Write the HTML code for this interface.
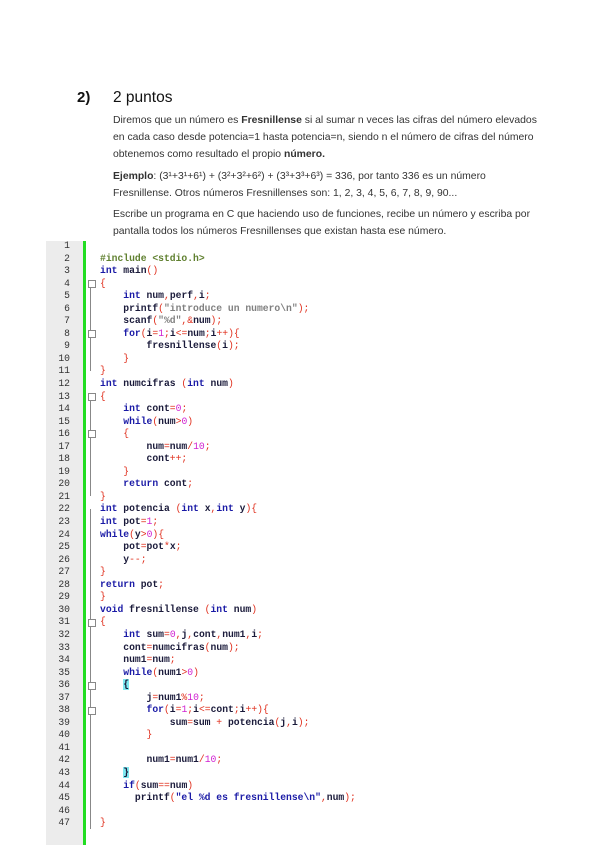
<!DOCTYPE html>
<html><head><meta charset="utf-8"><style>
body{margin:0;width:600px;height:848px;background:#fff;position:relative;overflow:hidden;font-family:"Liberation Sans",sans-serif;color:#222}
.h{position:absolute;top:89px;font-size:15px;font-weight:bold;color:#111}
.p{position:absolute;left:113px;font-size:10.4px;line-height:17px;color:#333;white-space:nowrap}
.gut{position:absolute;left:46px;top:241px;width:37px;height:604px;background:#ececec}
.grn{position:absolute;left:83px;top:241px;width:3px;height:604px;background:#22dd22}
.dots{position:absolute;left:86px;top:241px;width:12px;height:604px;background:repeating-linear-gradient(90deg,#f4f4f4 0 1px,#fff 1px 2px)}
.code{position:absolute;left:46px;top:240px;font-family:"Liberation Mono",monospace;font-size:9.7px;line-height:12.54px;white-space:pre;color:#1a1a3a;font-weight:bold}
.ln{display:inline-block;width:24px;text-align:right;color:#333;margin-right:30px;font-weight:normal}
.k{color:#1a1aa6}.o{color:#e0301e;font-weight:normal}.m{color:#d020d0;font-weight:normal}.g{color:#608030}.s{color:#808080}
.fold{position:absolute;left:90px;width:1px;background:#888}
.box{position:absolute;left:88px;width:6px;height:6px;border:1px solid #888;background:#fff}
</style></head><body>
<div class="h" style="left:77px">2)</div>
<div class="h" style="left:113px;font-weight:normal;font-size:15.5px">2 puntos</div>
<div class="p" style="top:112px">Diremos que un número es <b>Fresnillense</b> si al sumar n veces las cifras del número elevados<br>en cada caso desde potencia=1 hasta potencia=n, siendo n el número de cifras del número<br>obtenemos como resultado el propio <b>número.</b></div>
<div class="p" style="top:168px"><b>Ejemplo</b>: (3¹+3¹+6¹) + (3²+3²+6²) + (3³+3³+6³) = 336, por tanto 336 es un número<br>Fresnillense. Otros números Fresnillenses son: 1, 2, 3, 4, 5, 6, 7, 8, 9, 90...</div>
<div class="p" style="top:206px">Escribe un programa en C que haciendo uso de funciones, recibe un número y escriba por<br>pantalla todos los números Fresnillenses que existan hasta ese número.</div>
<div class="gut"></div><div class="grn"></div>
<div class="fold" style="top:283px;height:88px"></div>
<div class="fold" style="top:396px;height:100px"></div>
<div class="fold" style="top:509px;height:320px"></div>
<div class="box" style="top:280px"></div><div class="box" style="top:330px"></div>
<div class="box" style="top:393px"></div><div class="box" style="top:430px"></div>
<div class="box" style="top:619px"></div><div class="box" style="top:682px"></div><div class="box" style="top:707px"></div>
<div class="code"><span class="ln">1</span>
<span class="ln">2</span><span class="g">#include &lt;stdio.h&gt;</span>
<span class="ln">3</span><span class="k">int</span> main<span class="o">()</span>
<span class="ln">4</span><span class="o">{</span>
<span class="ln">5</span>    <span class="k">int</span> num<span class="o">,</span>perf<span class="o">,</span>i<span class="o">;</span>
<span class="ln">6</span>    printf<span class="o">(</span><span class="s">"introduce un numero\n"</span><span class="o">);</span>
<span class="ln">7</span>    scanf<span class="o">(</span><span class="s">"%d"</span><span class="o">,&amp;</span>num<span class="o">);</span>
<span class="ln">8</span>    <span class="k">for</span><span class="o">(</span>i<span class="o">=</span><span class="m">1</span><span class="o">;</span>i<span class="o">&lt;=</span>num<span class="o">;</span>i<span class="o">++){</span>
<span class="ln">9</span>        fresnillense<span class="o">(</span>i<span class="o">);</span>
<span class="ln">10</span>    <span class="o">}</span>
<span class="ln">11</span><span class="o">}</span>
<span class="ln">12</span><span class="k">int</span> numcifras <span class="o">(</span><span class="k">int</span> num<span class="o">)</span>
<span class="ln">13</span><span class="o">{</span>
<span class="ln">14</span>    <span class="k">int</span> cont<span class="o">=</span><span class="m">0</span><span class="o">;</span>
<span class="ln">15</span>    <span class="k">while</span><span class="o">(</span>num<span class="o">&gt;</span><span class="m">0</span><span class="o">)</span>
<span class="ln">16</span>    <span class="o">{</span>
<span class="ln">17</span>        num<span class="o">=</span>num<span class="o">/</span><span class="m">10</span><span class="o">;</span>
<span class="ln">18</span>        cont<span class="o">++;</span>
<span class="ln">19</span>    <span class="o">}</span>
<span class="ln">20</span>    <span class="k">return</span> cont<span class="o">;</span>
<span class="ln">21</span><span class="o">}</span>
<span class="ln">22</span><span class="k">int</span> potencia <span class="o">(</span><span class="k">int</span> x<span class="o">,</span><span class="k">int</span> y<span class="o">){</span>
<span class="ln">23</span><span class="k">int</span> pot<span class="o">=</span><span class="m">1</span><span class="o">;</span>
<span class="ln">24</span><span class="k">while</span><span class="o">(</span>y<span class="o">&gt;</span><span class="m">0</span><span class="o">){</span>
<span class="ln">25</span>    pot<span class="o">=</span>pot<span class="o">*</span>x<span class="o">;</span>
<span class="ln">26</span>    y<span class="o">--;</span>
<span class="ln">27</span><span class="o">}</span>
<span class="ln">28</span><span class="k">return</span> pot<span class="o">;</span>
<span class="ln">29</span><span class="o">}</span>
<span class="ln">30</span><span class="k">void</span> fresnillense <span class="o">(</span><span class="k">int</span> num<span class="o">)</span>
<span class="ln">31</span><span class="o">{</span>
<span class="ln">32</span>    <span class="k">int</span> sum<span class="o">=</span><span class="m">0</span><span class="o">,</span>j<span class="o">,</span>cont<span class="o">,</span>num1<span class="o">,</span>i<span class="o">;</span>
<span class="ln">33</span>    cont<span class="o">=</span>numcifras<span class="o">(</span>num<span class="o">);</span>
<span class="ln">34</span>    num1<span class="o">=</span>num<span class="o">;</span>
<span class="ln">35</span>    <span class="k">while</span><span class="o">(</span>num1<span class="o">&gt;</span><span class="m">0</span><span class="o">)</span>
<span class="ln">36</span>    <span style="background:#7fe8f0">{</span>
<span class="ln">37</span>        j<span class="o">=</span>num1<span class="o">%</span><span class="m">10</span><span class="o">;</span>
<span class="ln">38</span>        <span class="k">for</span><span class="o">(</span>i<span class="o">=</span><span class="m">1</span><span class="o">;</span>i<span class="o">&lt;=</span>cont<span class="o">;</span>i<span class="o">++){</span>
<span class="ln">39</span>            sum<span class="o">=</span>sum <span class="o">+</span> potencia<span class="o">(</span>j<span class="o">,</span>i<span class="o">);</span>
<span class="ln">40</span>        <span class="o">}</span>
<span class="ln">41</span>
<span class="ln">42</span>        num1<span class="o">=</span>num1<span class="o">/</span><span class="m">10</span><span class="o">;</span>
<span class="ln">43</span>    <span style="background:#7fe8f0">}</span>
<span class="ln">44</span>    <span class="k">if</span><span class="o">(</span>sum<span class="o">==</span>num<span class="o">)</span>
<span class="ln">45</span>      printf<span class="o">(</span><span class="s" style="color:#1a1aa6">"el %d es fresnillense\n"</span><span class="o">,</span>num<span class="o">);</span>
<span class="ln">46</span>
<span class="ln">47</span><span class="o">}</span>
</div>
</body></html>
